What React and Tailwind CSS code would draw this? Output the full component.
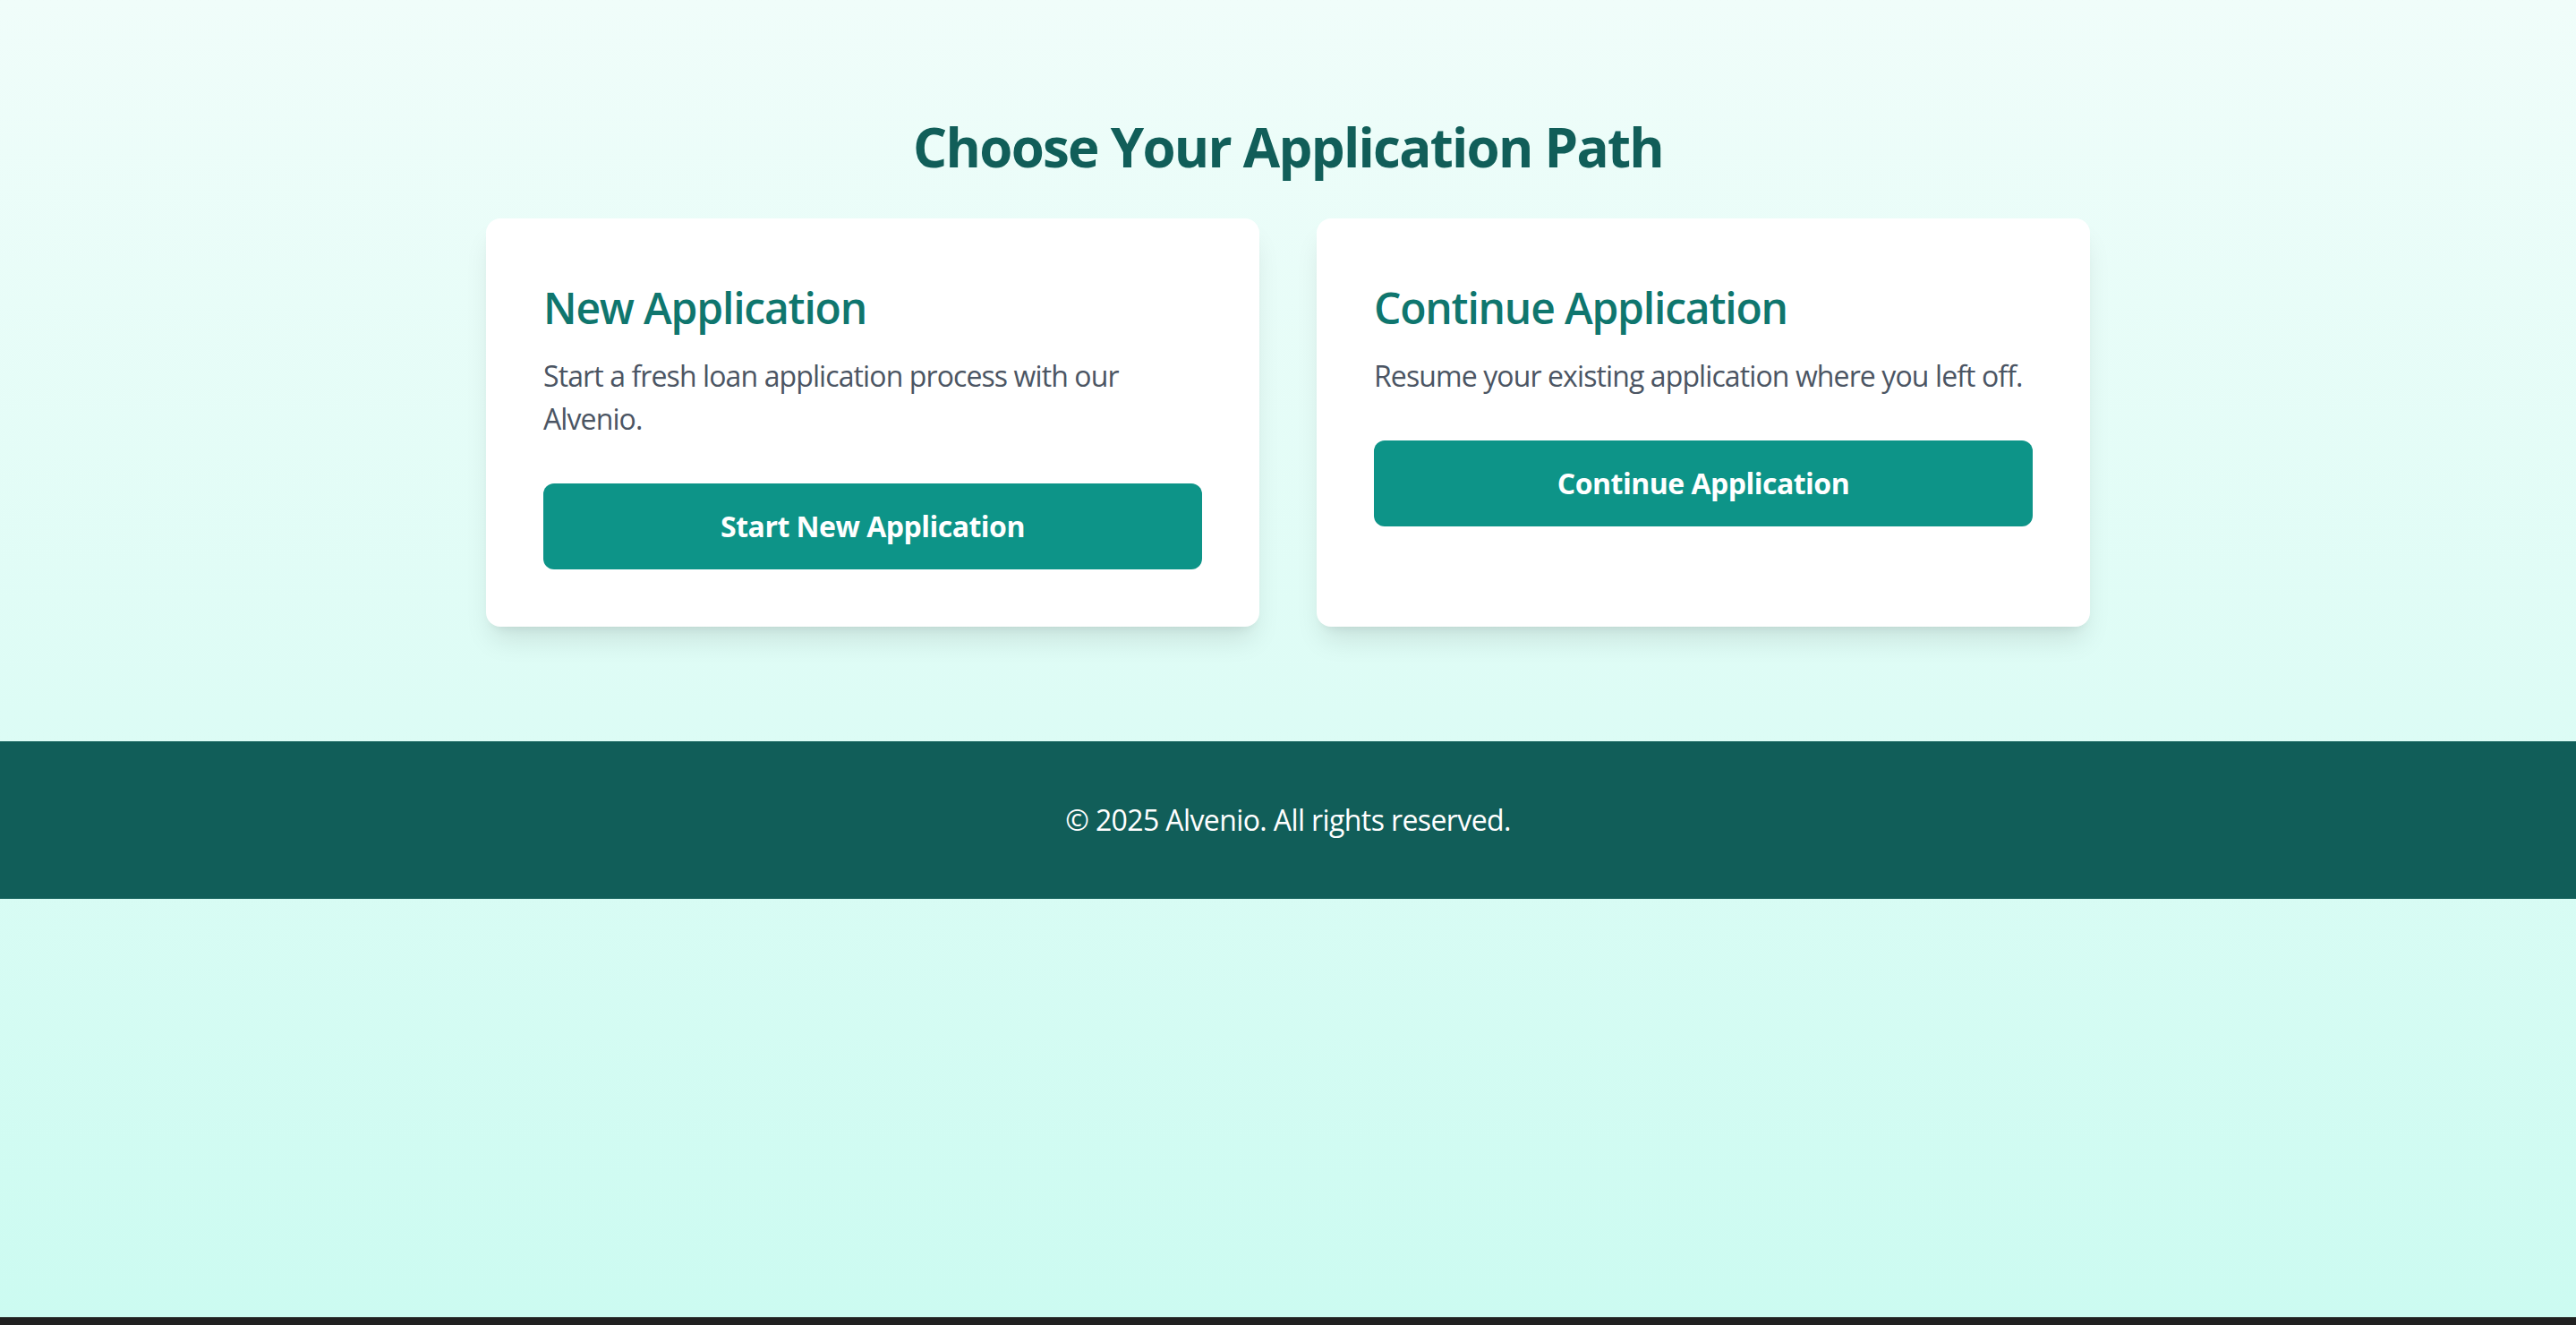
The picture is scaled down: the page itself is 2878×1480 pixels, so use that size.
import React from 'react';

// page is drawn at 2x scale, so every size is doubled from the usual 1x classes
function PathCard({ title, text, action }) {
  return (
    <div className="flex flex-col rounded-2xl bg-white p-16 shadow-[0_20px_30px_-6px_rgba(0,0,0,0.1),0_8px_12px_-8px_rgba(0,0,0,0.1)]">
      <h2 className="mt-1 mb-5 text-[48px] leading-[64px] font-semibold tracking-[-0.025em] text-[#0f766e]">{title}</h2>
      <p className="mb-12 text-[32px] leading-[48px] tracking-[-0.028em] text-[#4b5563]">{text}</p>
      <button className="w-full rounded-xl bg-[#0d9488] py-6 text-[32px] leading-[48px] font-bold tracking-[-0.016em] text-white hover:bg-[#0f766e] transition-colors">
        {action}
      </button>
    </div>
  );
}

export default function App() {
  return (
    <div className="flex min-h-screen flex-col font-['Segoe_UI','Open_Sans',sans-serif]">
      <div className="flex-1 bg-linear-to-b from-[#f0fdfa] to-[#ccfbf1]">
        <main className="mx-auto max-w-[1792px] pt-[128px] pb-[128px]">
          <h1 className="mb-11 text-center text-[60px] leading-[72px] font-bold tracking-[-0.029em] text-[#115e59]">
            Choose Your Application Path
          </h1>
          <div className="grid grid-cols-2 gap-16">
            <PathCard
              title="New Application"
              text="Start a fresh loan application process with our Alvenio."
              action="Start New Application"
            />
            <PathCard
              title="Continue Application"
              text="Resume your existing application where you left off."
              action="Continue Application"
            />
          </div>
        </main>
        <footer className="bg-[#115e59] py-16 text-center text-[32px] leading-[48px] tracking-[-0.019em] text-white">
          © 2025 Alvenio. All rights reserved.
        </footer>
      </div>
      <div className="h-[9px] border-t border-[#3d4542] bg-[#202020]" />
    </div>
  );
}
